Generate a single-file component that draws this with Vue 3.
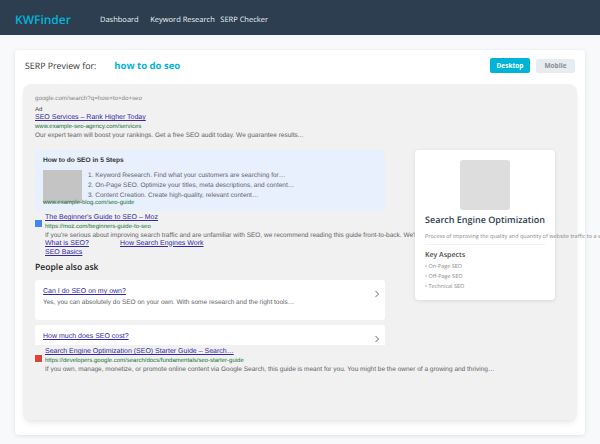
<script setup>
const navLinks = ['Dashboard', 'Keyword Research', 'SERP Checker']
const steps = [
  '1. Keyword Research. Find what your customers are searching for…',
  '2. On-Page SEO. Optimize your titles, meta descriptions, and content…',
  '3. Content Creation. Create high-quality, relevant content…'
]
const aspects = ['On-Page SEO', 'Off-Page SEO', 'Technical SEO']
</script>

<template>
  <div class="page">
    <header class="nav">
      <div class="logo">KWFinder</div>
      <nav class="links">
        <a v-for="l in navLinks" :key="l" class="nav-link">{{ l }}</a>
      </nav>
    </header>
    <main class="main">
      <section class="card">
        <div class="head">
          <div class="title">SERP Preview for:<span class="kw">how to do seo</span></div>
          <div class="toggle">
            <button class="btn on">Desktop</button>
            <button class="btn off">Mobile</button>
          </div>
        </div>
        <div class="serp">
          <div class="url-bar">google.com/search?q=how+to+do+seo</div>
          <div class="ad">Ad</div>
          <a class="link">SEO Services – Rank Higher Today</a>
          <div class="green">www.example-seo-agency.com/services</div>
          <div class="desc">Our expert team will boost your rankings. Get a free SEO audit today. We guarantee results...</div>

          <div class="snippet">
            <div class="snip-title">How to do SEO in 5 Steps</div>
            <div class="snip-body">
              <div class="thumb"></div>
              <div class="steps">
                <div v-for="s in steps" :key="s" class="step">{{ s }}</div>
              </div>
            </div>
          </div>
          <div class="green snip-url">www.example-blog.com/seo-guide</div>

          <div class="result r1">
            <span class="fav blue"></span>
            <div class="res-body">
              <a class="link">The Beginner's Guide to SEO – Moz</a>
              <div class="green">https://moz.com/beginners-guide-to-seo</div>
              <div class="desc nowrap">If you're serious about improving search traffic and are unfamiliar with SEO, we recommend reading this guide front-to-back. We'll walk you through</div>
              <div class="sitelinks">
                <a class="link sl">What is SEO?</a>
                <a class="link sl">How Search Engines Work</a>
                <a class="link sl">SEO Basics</a>
              </div>
            </div>
          </div>

          <h3 class="paa-title">People also ask</h3>
          <div class="paa">
            <div class="q">
              <div>
                <a class="link">Can I do SEO on my own?</a>
                <div class="desc">Yes, you can absolutely do SEO on your own. With some research and the right tools…</div>
              </div>
              <svg class="chev" viewBox="0 0 8 10" width="6" height="8"><path d="M2 1l4 4-4 4" fill="none" stroke="#888" stroke-width="1.4"/></svg>
            </div>
            <div class="q">
              <div>
                <a class="link">How much does SEO cost?</a>
              </div>
              <svg class="chev" viewBox="0 0 8 10" width="6" height="8"><path d="M2 1l4 4-4 4" fill="none" stroke="#888" stroke-width="1.4"/></svg>
            </div>
          </div>

          <div class="result r2">
            <span class="fav red"></span>
            <div class="res-body">
              <a class="link">Search Engine Optimization (SEO) Starter Guide – Search…</a>
              <div class="green">https://developers.google.com/search/docs/fundamentals/seo-starter-guide</div>
              <div class="desc nowrap">If you own, manage, monetize, or promote online content via Google Search, this guide is meant for you. You might be the owner of a growing and thriving…</div>
            </div>
          </div>

          <aside class="panel">
            <div class="panel-img"></div>
            <div class="panel-title">Search Engine Optimization</div>
            <div class="panel-desc">Process of improving the quality and quantity of website traffic to a website or a web page from search engines.</div>
            <div class="panel-sub">Key Aspects</div>
            <div v-for="a in aspects" :key="a" class="panel-item">• {{ a }}</div>
          </aside>
        </div>
      </section>
    </main>
  </div>
</template>

<style>
html, body { margin: 0; background: #f8f9fa; overflow: hidden; }
</style>

<style scoped>
.page { width: 600px; height: 444px; overflow: hidden; font-family: "Liberation Sans", Arial, sans-serif; background: #f8f9fa; text-rendering: geometricPrecision; }
.nav { height: 35px; background: #2c3e50; display: flex; align-items: center; padding: 0 15px; box-sizing: border-box; }
.logo { font-family: "Open Sans", sans-serif; font-weight: 600; font-size: 12px; color: #00b4d8; width: 85px; margin-top: 3px; }
.links { display: flex; gap: 11.5px; margin-top: 5px; }
.nav-link { font-family: "Open Sans", sans-serif; font-size: 7.5px; font-weight: 500; color: #eef2f5; }
.nav-link:nth-child(2) { margin-right: -6px; }
.main { padding: 15px; }
.card { background: #fff; border-radius: 4px; box-shadow: 0 1px 4px rgba(0,0,0,.1); height: 385px; box-sizing: border-box; padding: 0 8px; }
.head { height: 30px; margin-bottom: 4px; display: flex; justify-content: space-between; align-items: center; padding: 0 0 0 2px; }
.title { font-family: "Open Sans", sans-serif; font-size: 8.8px; color: #333; }
.kw { font-weight: 700; font-size: 9.5px; color: #00b4d8; margin-left: 18px; }
.toggle { display: flex; gap: 6px; margin-right: 2px; }
.btn { border: 0; height: 15px; padding: 0; width: 40px; border-radius: 2px; font-family: "Open Sans", sans-serif; font-size: 6.5px; font-weight: 700; }
.on { background: #00b4d8; color: #fff; }
.off { background: #e9ecef; color: #868e96; width: 39px; height: 14px; margin-top: 1px; }
.serp { position: relative; background: #f1f1f1; height: 336px; border-radius: 8px; box-shadow: 0 4px 6px -2px rgba(0,0,0,.12); padding: 11px 12px 0; box-sizing: border-box; color: #4d5156; }
.url-bar { color: #888; font-size: 6.2px; line-height: 8px; }
.ad { font-size: 6px; line-height: 8px; margin-top: 2.5px; margin-bottom: -.5px; color: #444; }
.link { display: block; color: #3428a4; text-decoration: underline; font-size: 7px; line-height: 10px; }
.green { color: #14713a; font-size: 6px; line-height: 8px; }
.desc { color: #5f6368; font-size: 6.5px; line-height: 9px; }
.nowrap { white-space: nowrap; }
.snippet { margin-top: 10px; background: #e8f0fe; border-radius: 4px; padding: 5.5px 8px 0; height: 61px; box-sizing: border-box; width: 350px; }
.snip-title { font-size: 6.6px; font-weight: 700; color: #333; line-height: 10px; }
.snip-body { display: flex; margin-top: 4.5px; }
.thumb { width: 39px; height: 33px; background: #c4c4c4; flex: none; margin-right: 6px; }
.steps { padding-top: 1px; }
.step { font-size: 6.5px; line-height: 10px; color: #5f6368; }
.snip-url { margin-left: 8px; margin-top: -12px; position: relative; }
.result { display: flex; align-items: flex-start; }
.fav { width: 7px; height: 7px; flex: none; margin-right: 3px; }
.blue { background: #4285f4; }
.red { background: #db4437; }
.r1 { margin-top: 6px; }
.r1 .fav { margin-top: 7px; }
.sitelinks { display: flex; flex-wrap: wrap; column-gap: 31px; width: 200px; margin-top: -1.5px; }
.sl { line-height: 9px; }
.paa-title { margin: 4px 0 7.3px; font-family: "Open Sans", sans-serif; font-size: 8.6px; font-weight: 600; color: #222; line-height: 12px; }
.paa { width: 350px; height: 65px; overflow: hidden; }
.q { background: #fff; border-radius: 3px; height: 40px; margin-bottom: 5px; padding: 7.7px 5.5px 8px 8px; box-sizing: border-box; display: flex; justify-content: space-between; align-items: flex-start; }
.q .desc { margin-top: .5px; }
.chev { margin-top: 3px; }
.r2 { margin-top: 2.7px; }
.r2 .fav { margin-top: 7.5px; }
.panel { position: absolute; left: 392px; top: 66px; width: 140px; height: 150px; background: #fff; border-radius: 4px; box-shadow: 0 1px 4px rgba(0,0,0,.1); padding: 10px; box-sizing: border-box; font-family: "Open Sans", sans-serif; }
.panel-img { width: 50px; height: 50px; background: #ddd; border-radius: 3px; margin: 0 auto 3px; }
.panel-title { font-size: 9px; font-weight: 600; color: #2c3e50; text-align: center; line-height: 14px; white-space: nowrap; }
.panel-desc { font-size: 5.5px; color: #888; line-height: 8px; white-space: nowrap; margin-top: 5px; padding-bottom: 4px; border-bottom: 1px solid #f2f2f2; }
.panel-sub { font-size: 7px; font-weight: 600; color: #444; margin-top: 5.5px; line-height: 10px; }
.panel-item { font-size: 5.5px; color: #888; line-height: 10px; }
</style>
